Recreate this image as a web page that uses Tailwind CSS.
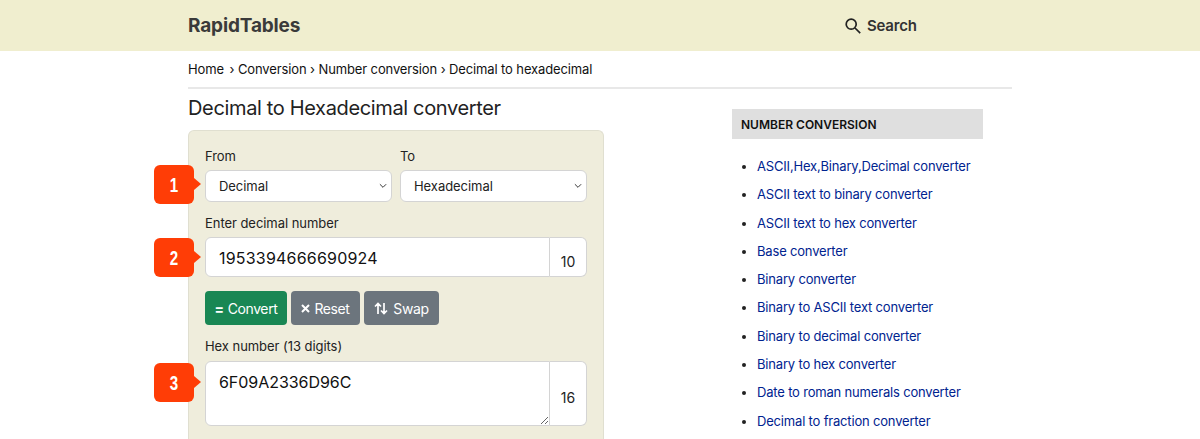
<!DOCTYPE html>
<html lang="en">
<head>
    <meta charset="UTF-8">
    <meta name="viewport" content="width=device-width, initial-scale=1.0">
    <title>Decimal to Hexadecimal converter</title>
    <script src="https://cdn.jsdelivr.net/npm/@tailwindcss/browser@4"></script>
</head>
<body class="bg-white h-[439px] overflow-hidden font-['Inter','Liberation_Sans',sans-serif] text-[#212529]">
    <header class="bg-[#f0eecf] h-[51px]">
        <div class="w-[824px] ml-[188px] h-full flex items-center pt-[1px]">
            <div class="text-[19px] font-bold text-[#3a3a3a] tracking-[-0.15px] w-[656px]">RapidTables</div>
            <div class="flex items-center text-[15px] font-semibold text-[#333] tracking-[-0.2px]">
                <svg class="w-[18px] h-[18px] mr-[5px]" viewBox="0 0 18 18" fill="none" stroke="#222" stroke-width="1.7"><circle cx="7.2" cy="7.2" r="5"/><path d="M11 11l5.2 5.2"/></svg>
                Search
            </div>
        </div>
    </header>

    <div class="w-[824px] ml-[188px]">
        <!-- Breadcrumb -->
        <div class="h-[38px] border-b-2 border-[#e8e8e8] pt-[10px] text-[13px] leading-[17px] text-[#111] tracking-[-0.12px]">
            Home <span class="ml-[2px]">›</span> Conversion › Number conversion › Decimal to hexadecimal
        </div>

        <div class="flex">
            <!-- Converter -->
            <main class="w-[416px]">
                <h1 class="text-[20px] leading-[24px] mt-[7px] h-[34px] text-[#222] tracking-[-0.35px]">Decimal to Hexadecimal converter</h1>
                <div class="bg-[#efeddc] border border-[#e0dfd0] border-b-0 rounded-t-[6px] h-[320px] px-[16px] pt-[17px] text-[13px] text-[#222] tracking-[-0.05px]">
                    <!-- From / To -->
                    <div class="flex gap-[8px] mb-[14px]">
                        <div class="w-[187px]">
                            <label class="block h-[22px] leading-[17px]">From</label>
                            <div class="relative">
                                <div class="absolute left-[-51px] top-[-5px] w-[40px] h-[39px] bg-[#ff3d06] rounded-[6px] flex items-center justify-center text-white font-['Liberation_Sans',sans-serif] font-bold text-[21px]"><span class="inline-block scale-x-[0.72]">1</span>
                                    <span class="absolute left-[40px] top-[13px] border-y-[6px] border-y-transparent border-l-[7px] border-l-[#ff3d06]"></span>
                                </div>
                                <select class="appearance-none block w-full h-[32px] bg-white border border-[#d4d4d4] rounded-[6px] pl-[13px] pt-[2px] text-[13px] text-[#222]"><option>Decimal</option></select>
                                <svg class="absolute right-[5px] top-[13px] w-[8px] h-[6px]" viewBox="0 0 9 6" fill="none" stroke="#333" stroke-width="1.1"><path d="M1 1l3.5 3.5L8 1"/></svg>
                            </div>
                        </div>
                        <div class="w-[187px]">
                            <label class="block h-[22px] leading-[17px]">To</label>
                            <div class="relative">
                                <select class="appearance-none block w-full h-[32px] bg-white border border-[#d4d4d4] rounded-[6px] pl-[13px] pt-[2px] text-[13px] text-[#222]"><option>Hexadecimal</option></select>
                                <svg class="absolute right-[5px] top-[13px] w-[8px] h-[6px]" viewBox="0 0 9 6" fill="none" stroke="#333" stroke-width="1.1"><path d="M1 1l3.5 3.5L8 1"/></svg>
                            </div>
                        </div>
                    </div>

                    <!-- Decimal input -->
                    <label class="block h-[21px] leading-[15px]">Enter decimal number</label>
                    <div class="relative flex h-[40px] w-[382px] mb-[14px]">
                        <div class="absolute left-[-51px] top-[1px] w-[40px] h-[39px] bg-[#ff3d06] rounded-[6px] flex items-center justify-center text-white font-['Liberation_Sans',sans-serif] font-bold text-[21px]"><span class="inline-block scale-x-[0.72]">2</span>
                            <span class="absolute left-[40px] top-[13px] border-y-[6px] border-y-transparent border-l-[7px] border-l-[#ff3d06]"></span>
                        </div>
                        <input value="1953394666690924" class="w-[345px] h-full bg-white border border-[#d4d4d4] rounded-l-[6px] pl-[13px] pt-[1px] text-[16px] tracking-[0.2px] text-[#111]">
                        <div class="w-[37px] h-full bg-white border border-l-0 border-[#d4d4d4] rounded-r-[6px] text-center pt-[14px] text-[14px] leading-[20px]">10</div>
                    </div>

                    <!-- Buttons -->
                    <div class="flex gap-[4px] h-[34px] text-[14px] text-white tracking-[-0.4px] mb-[14px]">
                        <button class="w-[82px] bg-[#198754] rounded-[4px] flex items-center justify-center gap-[4px]"><span class="font-bold">=</span>Convert</button>
                        <button class="w-[69px] bg-[#6c757d] rounded-[4px] flex items-center justify-center gap-[4px]"><svg class="w-[9px] h-[9px]" viewBox="0 0 9 9" fill="none" stroke="#fff" stroke-width="2"><path d="M1 1l7 7M8 1L1 8"/></svg>Reset</button>
                        <button class="w-[75px] bg-[#6c757d] rounded-[4px] flex items-center justify-center gap-[5px]"><svg class="w-[14px] h-[13px]" viewBox="0 0 14 13" fill="none" stroke="#fff" stroke-width="1.7"><path d="M4 12V1.5M1 4.5l3-3 3 3M10 1v10.5M7 8.5l3 3 3-3"/></svg>Swap</button>
                    </div>

                    <!-- Hex output -->
                    <label class="block h-[22px] leading-[15px]">Hex number (13 digits)</label>
                    <div class="relative flex h-[65px] w-[382px]">
                        <div class="absolute left-[-51px] top-[2px] w-[40px] h-[39px] bg-[#ff3d06] rounded-[6px] flex items-center justify-center text-white font-['Liberation_Sans',sans-serif] font-bold text-[21px]"><span class="inline-block scale-x-[0.72]">3</span>
                            <span class="absolute left-[40px] top-[13px] border-y-[6px] border-y-transparent border-l-[7px] border-l-[#ff3d06]"></span>
                        </div>
                        <textarea class="w-[345px] h-full bg-white border border-[#d4d4d4] rounded-l-[6px] pl-[13px] pt-[8px] text-[16px] leading-[24px] text-[#111]">6F09A2336D96C</textarea>
                        <div class="w-[37px] h-full bg-white border border-l-0 border-[#d4d4d4] rounded-r-[6px] text-center pt-[26px] text-[14px] leading-[20px]">16</div>
                    </div>
                </div>
            </main>

            <!-- Sidebar -->
            <aside class="w-[251px] ml-[128px] mt-[20px]">
                <div class="bg-[#dfdfdf] h-[30px] pl-[9px] pt-[1px] flex items-center text-[12px] font-semibold text-[#111]">NUMBER CONVERSION</div>
                <ul class="list-disc pl-[25px] mt-[13px] text-[13px] leading-[28.3px] text-[#00238f] marker:text-[#222] tracking-[-0.18px] whitespace-nowrap">
                    <li>ASCII,Hex,Binary,Decimal converter</li>
                    <li>ASCII text to binary converter</li>
                    <li>ASCII text to hex converter</li>
                    <li>Base converter</li>
                    <li>Binary converter</li>
                    <li>Binary to ASCII text converter</li>
                    <li>Binary to decimal converter</li>
                    <li>Binary to hex converter</li>
                    <li>Date to roman numerals converter</li>
                    <li>Decimal to fraction converter</li>
                </ul>
            </aside>
        </div>
    </div>
</body>
</html>
